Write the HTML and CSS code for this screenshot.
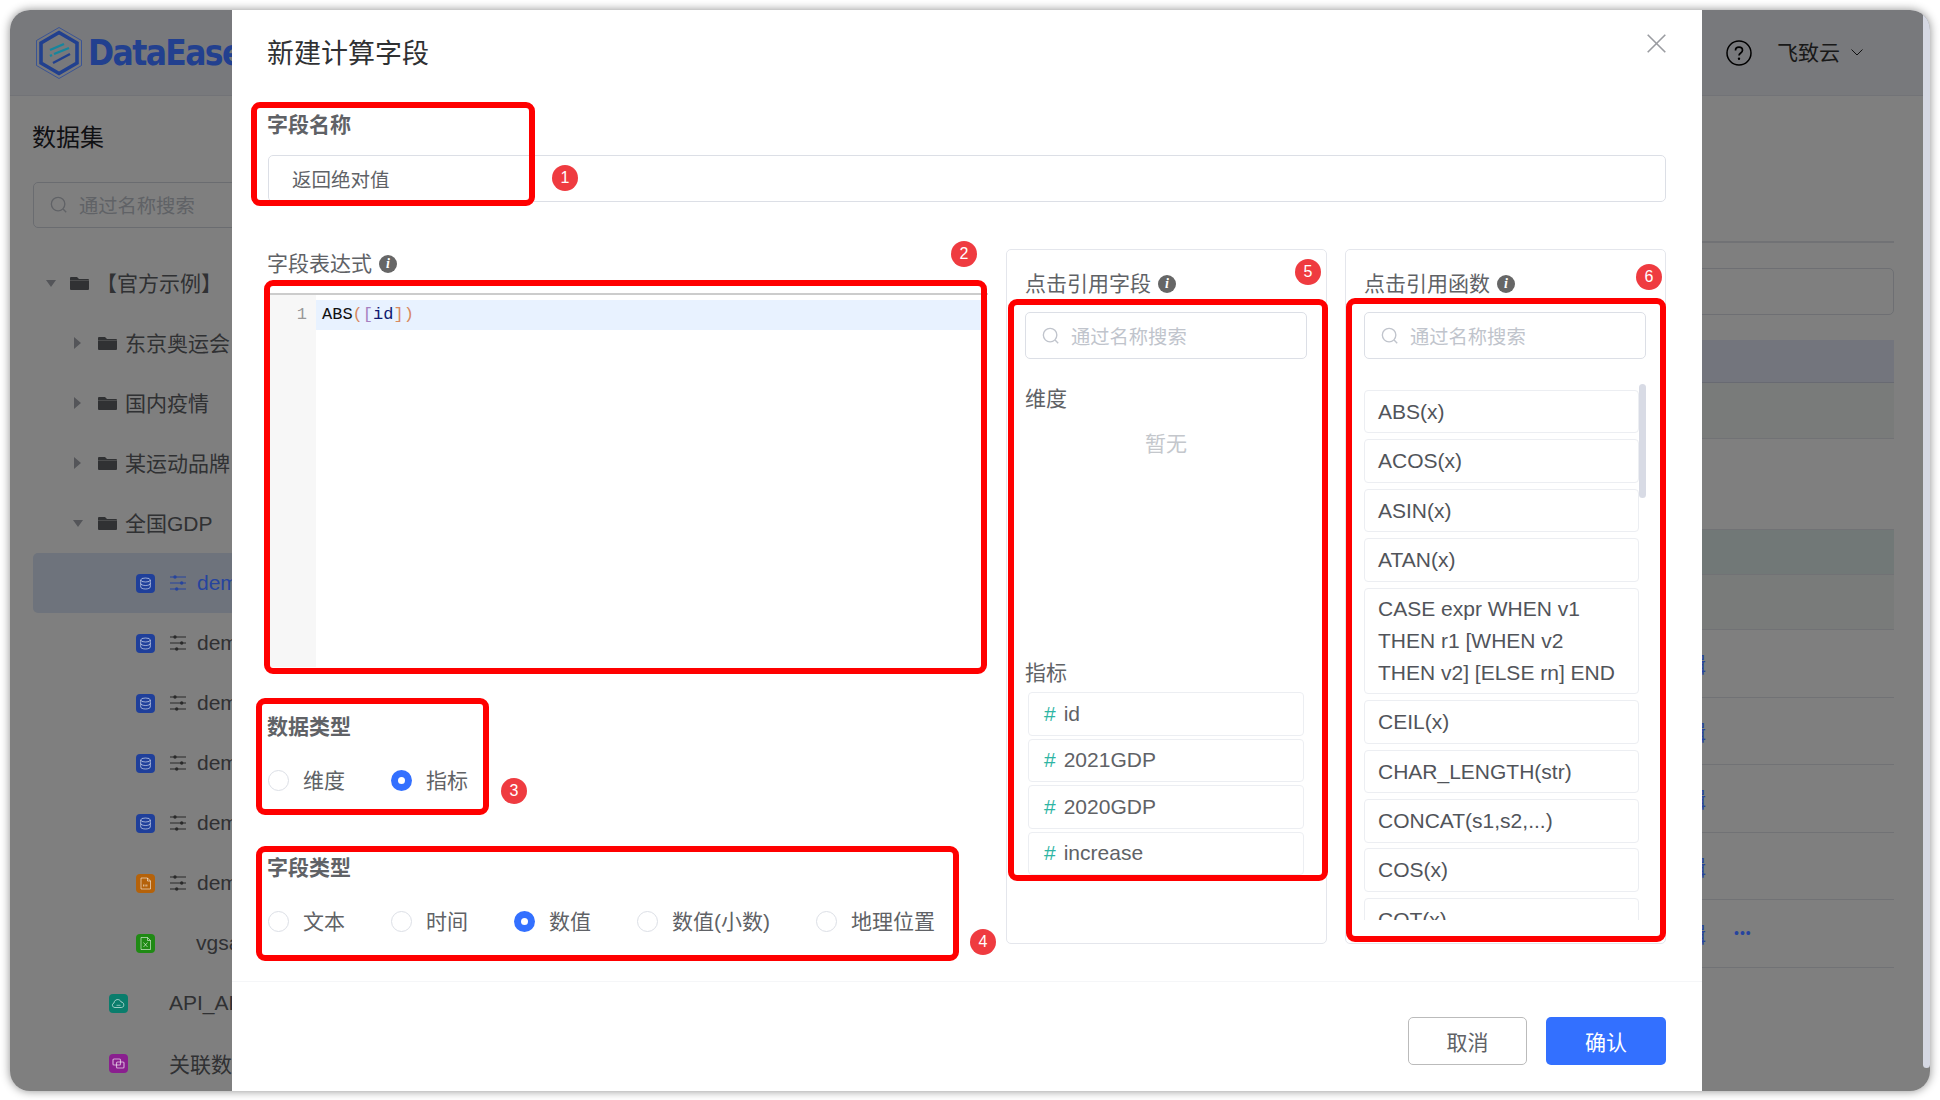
FILE: index.html
```html
<!DOCTYPE html>
<html lang="en">
<head>
    <meta charset="UTF-8">
    <title>DataEase</title>
    <link rel="stylesheet" href="styles.css">
</head>
<body>
    <svg class="icon-defs" width="0" height="0">
        <symbol id="i-folder" viewBox="0 0 19 14"><path d="M0 2a1 1 0 0 1 1-1h6l2 2h9a1 1 0 0 1 1 1v9a1 1 0 0 1-1 1H1a1 1 0 0 1-1-1z" fill="currentColor"/><path d="M0 4.500h19" stroke="#fff" stroke-opacity=".35" stroke-width="1"/></symbol>
        <symbol id="i-db" viewBox="0 0 19 19"><rect width="19" height="19" rx="4" fill="currentColor"/><g fill="none" stroke="#fff" stroke-opacity=".55" stroke-width="1"><ellipse cx="9.500" cy="6" rx="4.800" ry="2"/><path d="M4.700 6v7c0 1.100 2.100 2 4.800 2s4.800-.9 4.800-2V6M4.700 9.500c0 1.100 2.100 2 4.800 2s4.800-.9 4.800-2"/></g></symbol>
        <symbol id="i-doc" viewBox="0 0 19 19"><rect width="19" height="19" rx="4" fill="currentColor"/><g fill="none" stroke="#fff" stroke-opacity=".55" stroke-width="1"><path d="M5 4h6.500L14.500 7v8H5zM11.500 4v3h3"/><path d="M7 11.500h5" stroke-width="2" stroke-dasharray="1 .6"/></g></symbol>
        <symbol id="i-excel" viewBox="0 0 19 19"><rect width="19" height="19" rx="4" fill="currentColor"/><g fill="none" stroke="#fff" stroke-opacity=".55" stroke-width="1"><path d="M5 3.500h6.500L14.500 6.500v9H5zM11.500 3.500v3h3"/><path d="M7.500 8.500l4 4.500M11.500 8.500l-4 4.500"/></g></symbol>
        <symbol id="i-cloud" viewBox="0 0 19 19"><rect width="19" height="19" rx="4" fill="currentColor"/><path d="M6 13.500c-3 0-3.500-3.700-1-4.500.2-2.500 2.500-4 4.700-3.300 1.300.4 2 1.300 2.300 2.300 3.200-.2 4 5.200.5 5.500z" fill="none" stroke="#fff" stroke-opacity=".6" stroke-width="1"/><path d="M7.500 11.300h4" stroke="#fff" stroke-opacity=".5" stroke-width="1"/></symbol>
        <symbol id="i-union" viewBox="0 0 19 19"><rect width="19" height="19" rx="4" fill="currentColor"/><g fill="none" stroke="#fff" stroke-opacity=".6" stroke-width="1.200"><rect x="4" y="5" width="7.500" height="6" rx="1"/><rect x="7.500" y="8" width="7.500" height="6" rx="1"/></g></symbol>
        <symbol id="i-sliders" viewBox="0 0 16 16"><path d="M0 2h16M0 8h16M0 14h16" stroke="currentColor" stroke-width="1.200"/><circle cx="5" cy="2" r="1.700" fill="currentColor"/><circle cx="11.700" cy="8" r="1.700" fill="currentColor"/><circle cx="6.700" cy="14" r="1.700" fill="currentColor"/></symbol>
        <symbol id="i-search" viewBox="0 0 20 20"><circle cx="9" cy="9" r="7.500" fill="none" stroke="currentColor" stroke-width="1.500"/><path d="M14.500 14.500l3.500 3.500" stroke="currentColor" stroke-width="1.500"/></symbol>
    </svg>

    <div class="window">
        <!-- page behind the dialog -->
        <header class="topbar">
            <svg class="logo" viewBox="0 0 46 52">
                <path d="M23 .5 45.500 13.500v25L23 51.500.5 38.500v-25z" fill="none" stroke="#2b4a9a" stroke-width=".8"/>
                <path d="M23 5.500 41 16v20L23 46.500 5 36V16z" fill="none" stroke="#21408f" stroke-width="3.600"/>
                <path d="M14 23l14-6M14 29l2-1M18 27l15-6" stroke="#15869e" stroke-width="2.400" fill="none"/>
                <path d="M17 36l17-9" stroke="#21408f" stroke-width="2.400" fill="none"/>
            </svg>
            <span class="logo-text">DataEase</span>
            <span class="topbar-gap"></span>
            <svg class="help-icon" viewBox="0 0 26 26"><circle cx="13" cy="13" r="12" fill="none" stroke="#000" stroke-width="1.500"/><path d="M9.500 10.500c0-2 1.500-3.300 3.500-3.300s3.500 1.300 3.500 3.100c0 2.600-3.500 2.700-3.500 5.200" fill="none" stroke="#000" stroke-width="1.700"/><circle cx="13" cy="18.800" r="1.200"/></svg>
            <span class="user-name">飞致云</span>
            <svg class="user-arrow" viewBox="0 0 12 7"><path d="M.5.500 6 6l5.500-5.500" fill="none" stroke="#222" stroke-width="1"/></svg>
        </header>

        <div class="page-main">
            <aside class="sidebar">
                <div class="side-title">数据集</div>
                <div class="side-search">
                    <svg class="search-icon"><use href="#i-search"/></svg>
                    <span>通过名称搜索</span>
                </div>
                <div class="tree">
                    <div class="tree-row lv0"><i class="arrow-down"></i><svg class="folder"><use href="#i-folder"/></svg><span class="tree-text tree-text-root">【官方示例】</span></div>
                    <div class="tree-row lv1"><i class="arrow-right"></i><svg class="folder"><use href="#i-folder"/></svg><span class="tree-text">东京奥运会</span></div>
                    <div class="tree-row lv1"><i class="arrow-right"></i><svg class="folder"><use href="#i-folder"/></svg><span class="tree-text">国内疫情</span></div>
                    <div class="tree-row lv1"><i class="arrow-right"></i><svg class="folder"><use href="#i-folder"/></svg><span class="tree-text">某运动品牌</span></div>
                    <div class="tree-row lv1"><i class="arrow-down"></i><svg class="folder"><use href="#i-folder"/></svg><span class="tree-text">全国GDP</span></div>
                    <div class="tree-row lv2 active"><svg class="type-icon c-blue"><use href="#i-db"/></svg><svg class="sliders"><use href="#i-sliders"/></svg><span class="leaf-text">demo_gdp</span></div>
                    <div class="tree-row lv2"><svg class="type-icon c-blue"><use href="#i-db"/></svg><svg class="sliders"><use href="#i-sliders"/></svg><span class="leaf-text">demo_gdp</span></div>
                    <div class="tree-row lv2"><svg class="type-icon c-blue"><use href="#i-db"/></svg><svg class="sliders"><use href="#i-sliders"/></svg><span class="leaf-text">demo_gdp</span></div>
                    <div class="tree-row lv2"><svg class="type-icon c-blue"><use href="#i-db"/></svg><svg class="sliders"><use href="#i-sliders"/></svg><span class="leaf-text">demo_gdp</span></div>
                    <div class="tree-row lv2"><svg class="type-icon c-blue"><use href="#i-db"/></svg><svg class="sliders"><use href="#i-sliders"/></svg><span class="leaf-text">demo_gdp</span></div>
                    <div class="tree-row lv2"><svg class="type-icon c-orange"><use href="#i-doc"/></svg><svg class="sliders"><use href="#i-sliders"/></svg><span class="leaf-text">demo_gdp</span></div>
                    <div class="tree-row lv2"><svg class="type-icon c-green"><use href="#i-excel"/></svg><span class="leaf-text leaf-plain">vgsales</span></div>
                    <div class="tree-row lv1-leaf"><svg class="type-icon c-teal"><use href="#i-cloud"/></svg><span class="leaf-text leaf-top">API_ALL</span></div>
                    <div class="tree-row lv1-leaf"><svg class="type-icon c-purple"><use href="#i-union"/></svg><span class="leaf-text leaf-top">关联数据</span></div>
                </div>
            </aside>

            <section class="content">
                <div class="content-rule"></div>
                <div class="content-input"></div>
                <div class="table">
                    <div class="table-row row-head"></div>
                    <div class="table-row row-tint row-56"></div>
                    <div class="table-row row-91"></div>
                    <div class="table-row row-hl row-44"></div>
                    <div class="table-row row-tint row-55"></div>
                    <div class="table-row row-68"><span class="row-action">编辑</span></div>
                    <div class="table-row row-67"><span class="row-action">编辑</span></div>
                    <div class="table-row row-68"><span class="row-action">编辑</span></div>
                    <div class="table-row row-67"><span class="row-action">编辑</span></div>
                    <div class="table-row row-68"><span class="row-action">编辑</span><span class="row-dots">•••</span></div>
                </div>
            </section>
        </div>

        <div class="scrim"></div>
        <div class="page-scroll"></div>

        <!-- dialog -->
        <div class="dialog">
            <div class="dialog-head">
                <h2 class="dialog-title">新建计算字段</h2>
                <svg class="dialog-close" viewBox="0 0 19 19"><path d="M.7.7l17.600 17.600M18.300.7.7 18.300" stroke="#9a9ca1" stroke-width="1.600" fill="none"/></svg>
            </div>

            <div class="dialog-body">
                <div class="field-title">字段名称</div>
                <div class="name-input">返回绝对值</div>

                <div class="columns">
                    <div class="col-left">
                        <div class="plain-label">字段表达式 <i class="info-icon">i</i></div>
                        <div class="editor">
                            <div class="gutter">1</div>
                            <div class="code">
                                <div class="code-line">ABS<span class="c-paren">(</span><span class="c-brack">[</span><span class="c-id">id</span><span class="c-brack2">]</span><span class="c-paren">)</span></div>
                            </div>
                        </div>

                        <div class="field-title type-title">数据类型</div>
                        <div class="radio-group">
                            <label class="radio-item"><span class="radio"></span>维度</label>
                            <label class="radio-item"><span class="radio radio-on"></span>指标</label>
                        </div>

                        <div class="field-title type-title-2">字段类型</div>
                        <div class="radio-group">
                            <label class="radio-item"><span class="radio"></span>文本</label>
                            <label class="radio-item"><span class="radio"></span>时间</label>
                            <label class="radio-item"><span class="radio radio-on"></span>数值</label>
                            <label class="radio-item"><span class="radio"></span>数值(小数)</label>
                            <label class="radio-item"><span class="radio"></span>地理位置</label>
                        </div>
                    </div>

                    <div class="panel">
                        <div class="plain-label">点击引用字段 <i class="info-icon">i</i></div>
                        <div class="panel-search">
                            <svg class="search-icon"><use href="#i-search"/></svg>
                            <span>通过名称搜索</span>
                        </div>
                        <div class="dim-block">
                            <div class="plain-label">维度</div>
                            <div class="empty-text">暂无</div>
                        </div>
                        <div class="plain-label">指标</div>
                        <div class="field-list">
                            <div class="field-item"><b>#</b>id</div>
                            <div class="field-item"><b>#</b>2021GDP</div>
                            <div class="field-item"><b>#</b>2020GDP</div>
                            <div class="field-item"><b>#</b>increase</div>
                        </div>
                    </div>

                    <div class="panel">
                        <div class="plain-label">点击引用函数 <i class="info-icon">i</i></div>
                        <div class="panel-search">
                            <svg class="search-icon"><use href="#i-search"/></svg>
                            <span>通过名称搜索</span>
                        </div>
                        <div class="func-list">
                            <div class="func-item">ABS(x)</div>
                            <div class="func-item">ACOS(x)</div>
                            <div class="func-item">ASIN(x)</div>
                            <div class="func-item">ATAN(x)</div>
                            <div class="func-item">CASE expr WHEN v1 THEN r1 [WHEN v2 THEN v2] [ELSE rn] END</div>
                            <div class="func-item">CEIL(x)</div>
                            <div class="func-item">CHAR_LENGTH(str)</div>
                            <div class="func-item">CONCAT(s1,s2,...)</div>
                            <div class="func-item">COS(x)</div>
                            <div class="func-item">COT(x)</div>
                            <div class="func-thumb"></div>
                        </div>
                    </div>
                </div>
            </div>

            <div class="dialog-foot">
                <button class="btn">取消</button>
                <button class="btn btn-primary">确认</button>
            </div>
        </div>

        <!-- red annotations drawn on top of the screenshot -->
        <div class="mark mark-1"></div>
        <div class="mark mark-2"></div>
        <div class="mark mark-3"></div>
        <div class="mark mark-4"></div>
        <div class="mark mark-5"></div>
        <div class="mark mark-6"></div>
        <span class="badge badge-1">1</span>
        <span class="badge badge-2">2</span>
        <span class="badge badge-3">3</span>
        <span class="badge badge-4">4</span>
        <span class="badge badge-5">5</span>
        <span class="badge badge-6">6</span>
    </div>
</body>
</html>
```

FILE: styles.css
```css
html, body {
    margin: 0;
    height: 100%;
    overflow: hidden;
    background-color: #fff;
}

body {
    font-family: "Liberation Sans", "Noto Sans CJK SC", sans-serif;
    font-size: 21px;
    color: #606266;
}

.icon-defs {
    position: absolute;
}

.window {
    position: relative;
    width: 1920px;
    height: 1081px;
    margin: 10px;
    border-radius: 20px;
    overflow: hidden;
    background-color: #fff;
    box-shadow: 0 0 10px rgba(0, 0, 0, 0.45);
}

/* page behind the dialog */
.topbar {
    display: flex;
    align-items: center;
    height: 86px;
    padding-left: 26px;
    background-color: #f1f2f8;
    border-bottom: 1px solid #e4e6ee;
    box-sizing: border-box;
}

/* these keep their full colour, the scrim would wash them out */
.logo, .logo-text, .type-icon, .row-dots, .row-action, .active .leaf-text, .active .sliders {
    position: relative;
    z-index: 2;
}

.logo {
    width: 46px;
    height: 52px;
}

.logo-text {
    margin-left: 6px;
    font-family: "DejaVu Sans", sans-serif;
    font-stretch: condensed;
    font-size: 35px;
    font-weight: bold;
    letter-spacing: -1.6px;
    color: #22408f;
}

.topbar-gap {
    flex: 1;
}

.help-icon {
    width: 26px;
    height: 26px;
}

.user-name {
    margin-left: 25px;
    margin-bottom: 4px;
    color: #333;
}

.user-arrow {
    width: 12px;
    height: 7px;
    margin-left: 11px;
    margin-right: 67px;
}

.page-main {
    display: flex;
}

.sidebar {
    width: 300px;
    flex-shrink: 0;
    padding: 27px 0 0 23px;
    box-sizing: border-box;
}

.side-title {
    margin-left: -1px;
    font-size: 24px;
    line-height: 30px;
    color: #1f2329;
}

.side-search {
    display: flex;
    align-items: center;
    height: 46px;
    margin-top: 29px;
    padding-left: 16px;
    border: 1px solid #d5d8e0;
    border-radius: 5px;
    box-sizing: border-box;
    color: #c0c4cc;
    font-size: 19.3px;
}

.search-icon {
    width: 18px;
    height: 18px;
    margin-right: 11px;
    color: #c0c4cc;
}

.tree {
    margin-top: 25px;
}

.tree-row {
    display: flex;
    align-items: center;
    height: 60px;
    border-radius: 5px;
    white-space: nowrap;
}

.lv0 { padding-left: 13px; }
.lv1 { padding-left: 39px; }
.lv2 { padding-left: 103px; }
.lv1-leaf { padding-left: 76px; }

.active {
    background-color: #dce6f8;
}

.arrow-down, .arrow-right {
    display: block;
    width: 0;
    height: 0;
    border-style: solid;
    border-color: transparent;
}

.arrow-down {
    border-width: 7px 5px 0;
    border-top-color: #a8abb2;
}

.lv1 .arrow-down {
    margin: 0 1px;
}

.arrow-right {
    margin: 0 3px 0 2px;
    border-width: 6px 0 6px 7px;
    border-left-color: #a8abb2;
}

.folder {
    width: 19px;
    height: 14px;
    margin-left: 14px;
    color: #606266;
}

.tree-text {
    margin-left: 8px;
    margin-bottom: 3px;
}

.tree-text-root {
    margin-left: 7px;
}

.type-icon {
    width: 19px;
    height: 19px;
}

.c-blue { color: #1f3f9a; }
.c-orange { color: #b5620a; }
.c-green { color: #1f8a14; }
.c-teal { color: #0a7d6c; }
.c-purple { color: #8a1f8f; }

.sliders {
    width: 16px;
    height: 16px;
    margin-left: 15px;
    color: #555;
}

.leaf-text {
    margin-left: 11px;
}

.leaf-plain {
    margin-left: 41px;
}

.leaf-top {
    margin-left: 41px;
}

.active .leaf-text {
    color: #26449e;
}

.active .sliders {
    color: #26449e;
}

.content {
    flex: 1;
    padding: 145px 36px 0 0;
}

.content-rule {
    height: 2px;
    background-color: #e2e4ea;
}

.content-input {
    height: 47px;
    margin-top: 25px;
    border: 1px solid #dcdfe6;
    border-radius: 5px;
    box-sizing: border-box;
}

.table {
    margin-top: 25px;
}

.table-row {
    display: flex;
    align-items: center;
    border-bottom: 1px solid #e2e4ea;
    box-sizing: border-box;
}

.row-head { height: 43px; background-color: #e6ebfb; border-bottom-color: #d0d4e4; }
.row-56 { height: 56px; }
.row-91 { height: 91px; }
.row-44 { height: 44.5px; }
.row-55 { height: 55px; }
.row-68 { height: 68px; }
.row-67 { height: 67px; }
.row-tint { background-color: #f3f7f4; }
.row-hl { background-color: #e2f1ee; }

.row-action {
    width: 1396px;
    flex-shrink: 0;
    text-align: right;
    color: #26449e;
}

.row-dots {
    margin-left: 28px;
    font-size: 14px;
    letter-spacing: 1px;
    color: #26449e;
}

.scrim {
    position: absolute;
    inset: 0;
    z-index: 1;
    background-color: rgba(0, 0, 0, 0.5);
}

.page-scroll {
    position: absolute;
    top: 0;
    right: 0;
    z-index: 3;
    width: 7px;
    height: 1058px;
    background-color: #d5d8e3;
    border-radius: 0 0 4px 4px;
}

/* dialog */
.dialog {
    position: absolute;
    top: 0;
    left: 222px;
    z-index: 3;
    width: 1470px;
    height: 100%;
    display: flex;
    flex-direction: column;
    background-color: #fff;
}

.dialog-head {
    display: flex;
    justify-content: space-between;
    align-items: center;
    height: 84px;
    padding: 0 36px;
    flex-shrink: 0;
}

.dialog-title {
    margin: -2px 0 0 -1px;
    font-size: 27px;
    font-weight: normal;
    color: #303133;
}

.dialog-close {
    align-self: flex-start;
    width: 19px;
    height: 19px;
    margin-top: 24px;
}

.dialog-body {
    flex: 1;
    padding: 16px 36px 0;
}

.field-title {
    margin-left: -1px;
    font-size: 21px;
    line-height: 30px;
    font-weight: bold;
    color: #606266;
}

.name-input {
    display: flex;
    align-items: center;
    height: 47px;
    margin-top: 15px;
    padding-left: 23px;
    border: 1px solid #dcdfe6;
    border-radius: 5px;
    box-sizing: border-box;
    font-size: 19.5px;
}

.columns {
    display: grid;
    grid-template-columns: 720px 321px 321px;
    column-gap: 18px;
    height: 695px;
    margin-top: 47px;
}

.plain-label {
    display: flex;
    align-items: center;
    gap: 7px;
    font-size: 21px;
    line-height: 30px;
    color: #606266;
}

.col-left .plain-label {
    margin-left: -1px;
}

.info-icon {
    display: block;
    width: 18px;
    height: 18px;
    border-radius: 50%;
    background-color: #666;
    color: #fff;
    font: italic bold 14px/18px "Liberation Serif", serif;
    text-align: center;
}

.editor {
    display: flex;
    height: 374px;
    margin-top: 14px;
    border-top: 2px solid #ccc;
    box-sizing: border-box;
    font-family: "Liberation Mono", monospace;
    font-size: 17px;
    line-height: 30px;
}

.gutter {
    width: 48px;
    padding-top: 5px;
    padding-right: 9px;
    box-sizing: border-box;
    background-color: #f7f7f7;
    text-align: right;
    color: #999;
}

.code {
    flex: 1;
    padding-top: 5px;
}

.code-line {
    height: 30px;
    padding-left: 6px;
    background-color: #e8f2ff;
    color: #111;
}

.c-paren { color: #d8895f; }
.c-brack { color: #a77fc0; }
.c-brack2 { color: #d8895f; }
.c-id { color: #101a70; }

.type-title {
    margin-top: 45px;
}

.type-title-2 {
    margin-top: 59px;
}

.radio-group {
    display: flex;
    gap: 46px;
    height: 30px;
    margin-top: 22px;
}

.radio-item {
    display: flex;
    align-items: center;
    gap: 14px;
    white-space: nowrap;
}

.radio {
    position: relative;
    width: 21px;
    height: 21px;
    margin-top: 2px;
    border: 1px solid #dcdfe6;
    border-radius: 50%;
    box-sizing: border-box;
}

.radio-on {
    border: none;
    background-color: #3370ff;
}

.radio-on::after {
    content: "";
    position: absolute;
    top: 7px;
    left: 7px;
    width: 7px;
    height: 7px;
    border-radius: 50%;
    background-color: #fff;
}

.panel {
    padding: 19px 19px 0 18px;
    border: 1px solid #e4e6ec;
    border-radius: 5px;
    box-sizing: border-box;
}

.panel-search {
    display: flex;
    align-items: center;
    height: 47px;
    margin-top: 13px;
    padding-left: 16px;
    border: 1px solid #dcdfe6;
    border-radius: 5px;
    box-sizing: border-box;
    color: #c0c4cc;
    font-size: 19.3px;
}

.dim-block {
    height: 299px;
    padding-top: 25px;
    box-sizing: border-box;
}

.empty-text {
    margin-top: 15px;
    line-height: 30px;
    text-align: center;
    color: #c4c7cc;
}

.field-list {
    height: 183px;
    margin: 4px 3px 0;
    overflow: hidden;
}

.field-item {
    display: flex;
    align-items: center;
    height: 43.5px;
    margin-bottom: 3px;
    padding-left: 15px;
    border: 1px solid #eceef2;
    border-radius: 4px;
    box-sizing: border-box;
}

.field-item b {
    margin-right: 8px;
    font-weight: normal;
    color: #2fb5a4;
}

.func-list {
    position: relative;
    width: 282px;
    height: 542px;
    margin-top: 19px;
    padding-top: 12px;
    box-sizing: border-box;
    overflow: hidden;
}

.func-item {
    width: 275px;
    margin-bottom: 5.9px;
    padding: 4.9px 13px;
    line-height: 31.7px;
    color: #51545a;
    border: 1px solid #eceef2;
    border-radius: 4px;
    box-sizing: border-box;
}

.func-thumb {
    position: absolute;
    top: 6px;
    right: 0;
    width: 7px;
    height: 114px;
    border-radius: 4px;
    background-color: #d8dbe5;
}

.dialog-foot {
    display: flex;
    justify-content: flex-end;
    gap: 19px;
    height: 110px;
    padding: 35px 36px 0;
    border-top: 1px solid #f5f6f8;
    box-sizing: border-box;
    flex-shrink: 0;
}

.btn {
    width: 119px;
    height: 48px;
    border: 1px solid #bbb;
    border-radius: 5px;
    background-color: #fff;
    color: #606266;
    font-family: inherit;
    font-size: 21px;
}

.btn-primary {
    width: 120px;
    border: none;
    background-color: #3370ff;
    color: #fff;
}

/* annotations */
.mark {
    position: absolute;
    z-index: 4;
    border: 6px solid #f00;
    border-radius: 9px;
    box-sizing: border-box;
}

.mark-1 { left: 241px; top: 92px; width: 284px; height: 104px; }
.mark-2 { left: 254px; top: 270px; width: 723px; height: 394px; }
.mark-3 { left: 246px; top: 688px; width: 233px; height: 117px; }
.mark-4 { left: 246px; top: 836px; width: 703px; height: 115px; }
.mark-5 { left: 998px; top: 289px; width: 320px; height: 582px; }
.mark-6 { left: 1336px; top: 288px; width: 320px; height: 644px; }

.badge {
    position: absolute;
    z-index: 4;
    display: flex;
    align-items: center;
    justify-content: center;
    width: 26px;
    height: 26px;
    border-radius: 50%;
    background-color: #ef3b40;
    color: #fff;
    font-size: 16px;
}

.badge-1 { left: 542px; top: 155px; }
.badge-2 { left: 941px; top: 231px; }
.badge-3 { left: 491px; top: 768px; }
.badge-4 { left: 960px; top: 919px; }
.badge-5 { left: 1285px; top: 249px; }
.badge-6 { left: 1626px; top: 254px; }
```
